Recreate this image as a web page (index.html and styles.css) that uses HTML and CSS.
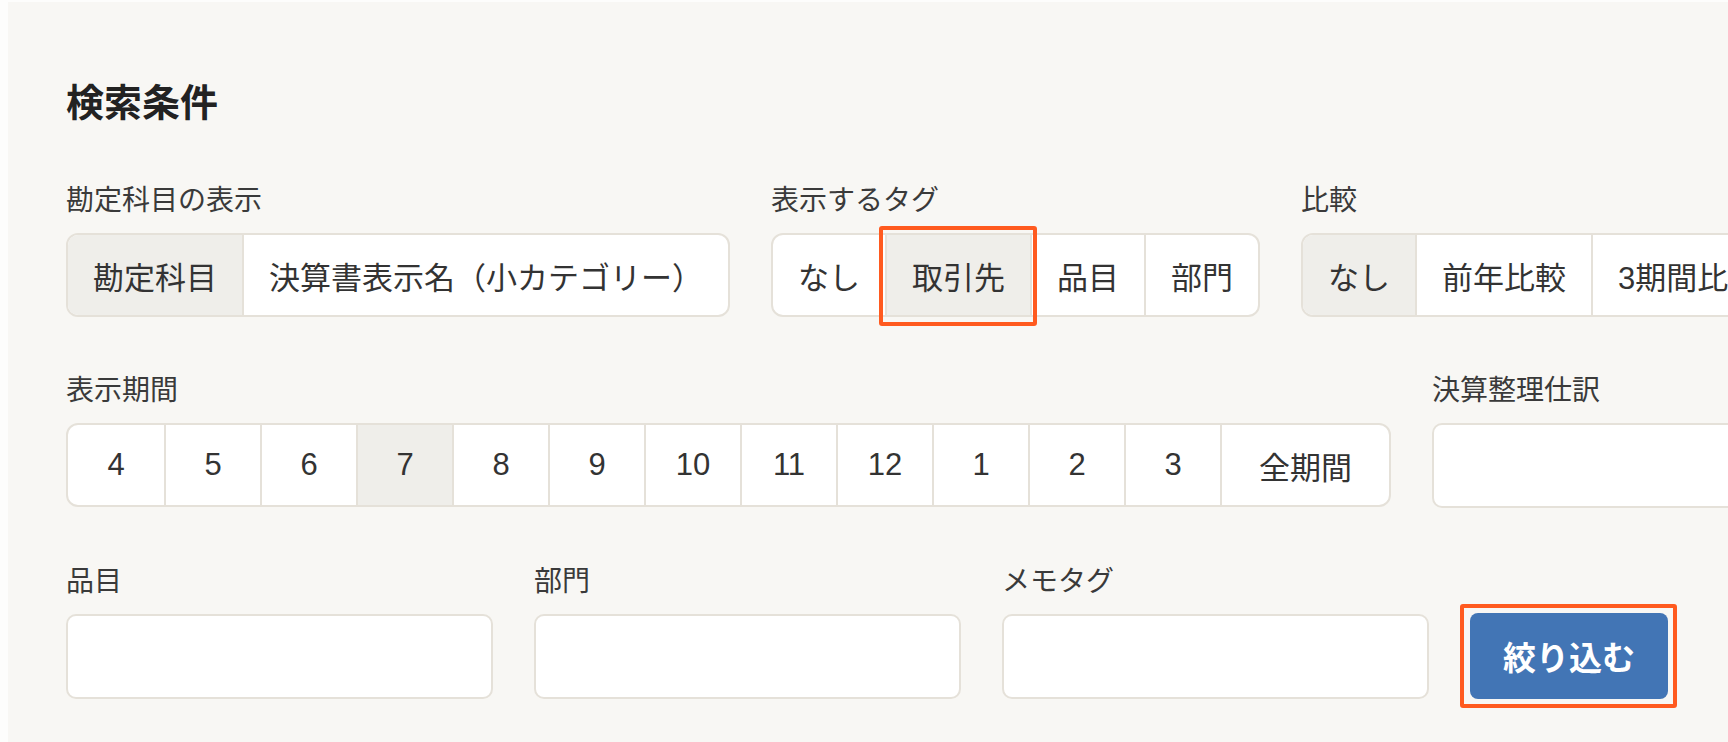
FILE: index.html
```html
<!DOCTYPE html>
<html lang="ja">
<head>
    <meta charset="UTF-8">
    <meta name="viewport" content="width=device-width, initial-scale=1.0">
    <title>検索条件</title>
    <link rel="stylesheet" href="styles.css">
</head>
<body>
    <div class="panel">
        <h1 class="title">検索条件</h1>

        <!-- row 1 -->
        <div class="row">
            <div class="field">
                <div class="label">勘定科目の表示</div>
                <div class="seg-group">
                    <div class="seg active">勘定科目</div>
                    <div class="seg">決算書表示名（小カテゴリー）</div>
                </div>
            </div>
            <div class="field">
                <div class="label">表示するタグ</div>
                <div class="seg-group">
                    <div class="seg">なし</div>
                    <div class="seg active marked">取引先</div>
                    <div class="seg">品目</div>
                    <div class="seg">部門</div>
                </div>
            </div>
            <div class="field">
                <div class="label">比較</div>
                <div class="seg-group">
                    <div class="seg active">なし</div>
                    <div class="seg">前年比較</div>
                    <div class="seg">3期間比較</div>
                </div>
            </div>
        </div>

        <!-- row 2 -->
        <div class="row">
            <div class="field">
                <div class="label">表示期間</div>
                <div class="seg-group">
                    <div class="seg num">4</div>
                    <div class="seg num">5</div>
                    <div class="seg num">6</div>
                    <div class="seg num active">7</div>
                    <div class="seg num">8</div>
                    <div class="seg num">9</div>
                    <div class="seg num">10</div>
                    <div class="seg num">11</div>
                    <div class="seg num">12</div>
                    <div class="seg num">1</div>
                    <div class="seg num">2</div>
                    <div class="seg num">3</div>
                    <div class="seg wide">全期間</div>
                </div>
            </div>
            <div class="field">
                <div class="label">決算整理仕訳</div>
                <input class="box" type="text">
            </div>
        </div>

        <!-- row 3 -->
        <div class="row bottom">
            <div class="field">
                <div class="label">品目</div>
                <input class="box" type="text">
            </div>
            <div class="field">
                <div class="label">部門</div>
                <input class="box" type="text">
            </div>
            <div class="field">
                <div class="label">メモタグ</div>
                <input class="box" type="text">
            </div>
            <button class="submit marked">絞り込む</button>
        </div>
    </div>
</body>
</html>
```

FILE: styles.css
```css
html, body {
    overflow: hidden;
}

body {
    margin: 0;
    background: #fdfdfc;
    font-family: "Liberation Sans", "Noto Sans CJK JP", sans-serif;
    color: #333;
}

.panel {
    margin: 2px 0 0 8px;
    padding: 82px 0 0 58px;
    height: calc(100vh - 84px);
    background: #f8f7f4;
}

.title {
    margin: 0 0 63px 0;
    font-size: 38px;
    line-height: 1;
    font-weight: bold;
    color: #222;
}

/* rows */
.row {
    display: flex;
    gap: 41px;
    margin-bottom: 58px;
}

.row.bottom {
    align-items: flex-end;
}

.field {
    flex: none;
}

.label {
    margin: 2px 0 18px 0;
    font-size: 28px;
    line-height: 1;
    color: #3a3a3a;
    white-space: nowrap;
}

/* segmented buttons */
.seg-group {
    display: flex;
    border: 2px solid #e5e1d9;
    border-radius: 12px;
    background: #fff;
}

.seg {
    position: relative;
    display: flex;
    align-items: center;
    justify-content: center;
    box-sizing: border-box;
    height: 80px;
    padding: 0 25px;
    font-size: 31px;
    color: #333;
    white-space: nowrap;
}

.seg + .seg {
    border-left: 2px solid #e5e1d9;
}

.seg:first-child {
    border-radius: 10px 0 0 10px;
}

.seg:last-child {
    border-radius: 0 10px 10px 0;
}

.seg.active {
    background: #efeeea;
}

.seg.num {
    width: 96px;
    padding: 0;
}

.seg.wide {
    padding: 0 37px;
}

/* text boxes */
.box {
    display: block;
    box-sizing: border-box;
    width: 427px;
    height: 85px;
    margin: 0;
    border: 2px solid #e5e1d9;
    border-radius: 10px;
    background: #fff;
    font-size: 28px;
}

.submit {
    position: relative;
    flex: none;
    width: 198px;
    height: 86px;
    margin: 0;
    border: none;
    border-radius: 8px;
    background: #4275b5;
    color: #fff;
    font-family: "Noto Sans CJK JP", sans-serif;
    font-size: 33px;
    font-weight: bold;
}

/* red annotation boxes */
.marked::after {
    content: "";
    position: absolute;
    top: -9px;
    left: -10px;
    right: -9px;
    bottom: -9px;
    border: 4px solid #ff5a1f;
    border-radius: 3px;
    pointer-events: none;
}

.seg.marked::after {
    top: -9px;
    left: -8px;
    right: -7px;
    bottom: -11px;
}
```
